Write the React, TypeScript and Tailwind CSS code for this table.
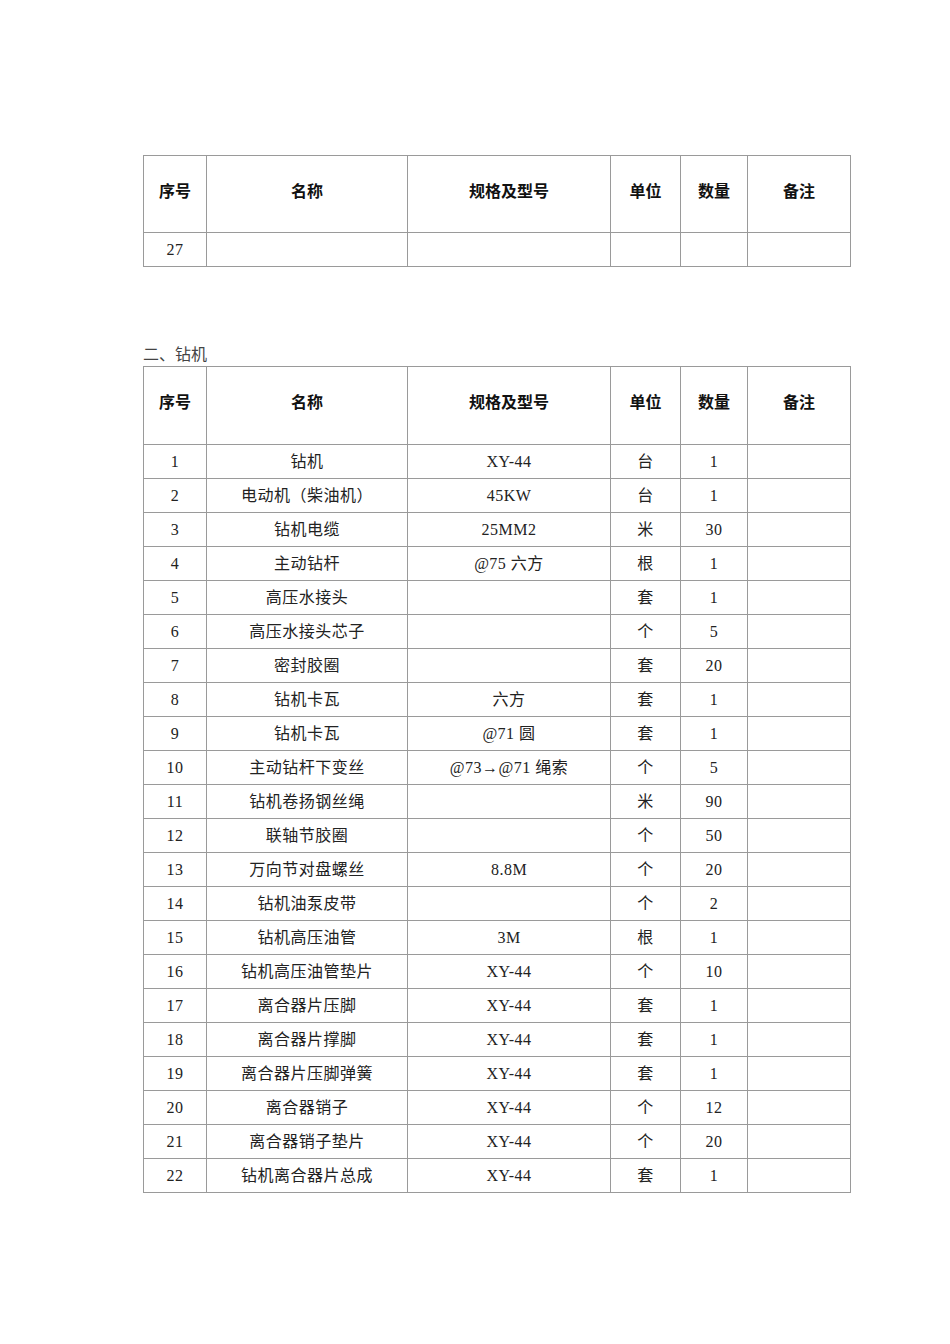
const cols = ['w-[63px]', 'w-[201px]', 'w-[203px]', 'w-[70px]', 'w-[67px]', 'w-[103px]'];
const headers = ['序号', '名称', '规格及型号', '单位', '数量', '备注'];

const rows: string[][] = [
  ['1', '钻机', 'XY-44', '台', '1'],
  ['2', '电动机（柴油机）', '45KW', '台', '1'],
  ['3', '钻机电缆', '25MM2', '米', '30'],
  ['4', '主动钻杆', '@75 六方', '根', '1'],
  ['5', '高压水接头', '', '套', '1'],
  ['6', '高压水接头芯子', '', '个', '5'],
  ['7', '密封胶圈', '', '套', '20'],
  ['8', '钻机卡瓦', '六方', '套', '1'],
  ['9', '钻机卡瓦', '@71 圆', '套', '1'],
  ['10', '主动钻杆下变丝', '@73→@71 绳索', '个', '5'],
  ['11', '钻机卷扬钢丝绳', '', '米', '90'],
  ['12', '联轴节胶圈', '', '个', '50'],
  ['13', '万向节对盘螺丝', '8.8M', '个', '20'],
  ['14', '钻机油泵皮带', '', '个', '2'],
  ['15', '钻机高压油管', '3M', '根', '1'],
  ['16', '钻机高压油管垫片', 'XY-44', '个', '10'],
  ['17', '离合器片压脚', 'XY-44', '套', '1'],
  ['18', '离合器片撑脚', 'XY-44', '套', '1'],
  ['19', '离合器片压脚弹簧', 'XY-44', '套', '1'],
  ['20', '离合器销子', 'XY-44', '个', '12'],
  ['21', '离合器销子垫片', 'XY-44', '个', '20'],
  ['22', '钻机离合器片总成', 'XY-44', '套', '1'],
];

const HeaderRow = ({ tall }: { tall?: boolean }) => (
  <tr className={tall ? 'h-[78px]' : 'h-[77px]'}>
    {headers.map((h, i) => (
      <th key={i} className={`${cols[i]} border border-[#9a9a9a] pb-[9px] text-center align-middle font-bold text-[16px] text-[#111] font-['Noto_Sans_CJK_SC',sans-serif]`}>
        {h}
      </th>
    ))}
  </tr>
);

const Row = ({ cells }: { cells: string[] }) => (
  <tr className="h-[34px]">
    {[0, 1, 2, 3, 4, 5].map((i) => (
      <td key={i} className="border border-[#9a9a9a] p-0 pt-[1px] text-center align-middle text-[16px] tracking-[0.5px] text-[#222]">
        {cells[i] ?? ''}
      </td>
    ))}
  </tr>
);

const App = () => (
  <div className="min-h-[1344px] w-[950px] bg-white pt-[155px] pl-[143px] font-['Liberation_Serif','Noto_Sans_CJK_SC',serif]">
    <table className="w-[707px] table-fixed border-collapse">
      <tbody>
        <HeaderRow />
        <Row cells={['27']} />
      </tbody>
    </table>

    <div className="mt-[78px] h-[21px] text-[16px] leading-[19px] text-[#444]">二、钻机</div>

    <table className="w-[707px] table-fixed border-collapse">
      <tbody>
        <HeaderRow tall />
        {rows.map((r) => (
          <Row key={r[0]} cells={r} />
        ))}
      </tbody>
    </table>
  </div>
);

export default App;
